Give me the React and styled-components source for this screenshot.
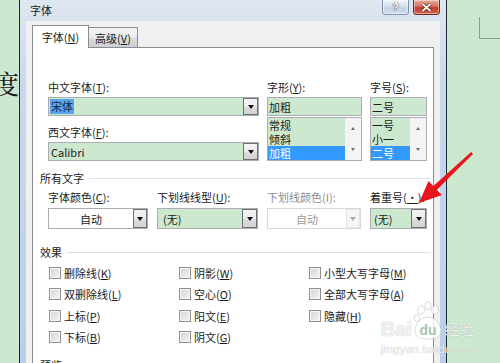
import React from "react";
import styled, { createGlobalStyle } from "styled-components";

const GlobalStyle = createGlobalStyle`
  html, body {
    margin: 0;
    padding: 0;
  }
  body {
    width: 500px;
    height: 363px;
    overflow: hidden;
    background: #cce8cf;
    font-family: "Noto Sans CJK SC", "Microsoft YaHei", sans-serif;
    font-size: 11px;
    color: #1b1b1b;
  }
`;

const Screen = styled.div`
  position: relative;
  display: flex;
  width: 500px;
  height: 363px;
  overflow: hidden;
  background: #cce8cf;
`;

const DocLeft = styled.div`
  width: 19px;
  flex-shrink: 0;
  display: flex;
  justify-content: flex-end;
  align-items: flex-start;
  overflow: hidden;
  padding-top: 68px;
  box-sizing: border-box;
  font-family: "Noto Serif CJK SC", "Noto Sans CJK SC", serif;
  font-size: 26px;
  line-height: 30px;
  color: #151515;
`;

const DocRight = styled.div`
  flex: 1;
`;

const CornerMark = styled.div`
  margin: 17px 0 0 32px;
  height: 21px;
  border-left: 1px solid #8c9c8e;
  border-bottom: 1px solid #8c9c8e;
`;

const Dialog = styled.div`
  width: 428px;
  flex-shrink: 0;
  box-sizing: border-box;
  display: flex;
  flex-direction: column;
  border-left: 1px solid #1e2833;
  border-right: 1px solid #1e2833;
  background: linear-gradient(#dfe7f1, #c9d9ed 80px, #b9cfe9);
`;

const TitleBar = styled.div`
  height: 21px;
  flex-shrink: 0;
  display: flex;
  align-items: flex-start;
  padding: 0 6px 0 10px;
`;

const Title = styled.div`
  margin-top: 3px;
  line-height: 14px;
  color: #1a1a1a;
`;

const Caption = styled.div`
  margin-left: auto;
  display: flex;
  gap: 4px;
  margin-top: -1px;
`;

const CaptionButton = styled.div`
  width: 27px;
  height: 16px;
  box-sizing: border-box;
  display: flex;
  align-items: center;
  justify-content: center;
  border: 1px solid ${(p) => (p.$close ? "#6b2a22" : "#7f93ad")};
  border-radius: 0 0 3px 3px;
  background: ${(p) =>
    p.$close
      ? "linear-gradient(#e9a99b, #d47565 45%, #c0392b 55%, #d6654f)"
      : "linear-gradient(#eef3f9, #d6e1ee 45%, #c2d2e6 55%, #d2deec)"};
  box-shadow: inset 0 0 0 1px rgba(255, 255, 255, 0.45);
  color: #fff;
  font-family: "Liberation Sans", sans-serif;
  font-weight: bold;
  font-size: 11px;
  text-shadow: 0 0 1px #333, 0 0 1px #333;
`;

const Body = styled.div`
  flex: 1;
  margin: 0 6px;
  padding: 4px 6px 0 6px;
  background: #f0f0f0;
  display: flex;
  flex-direction: column;
`;

const TabStrip = styled.div`
  height: 22px;
  display: flex;
  align-items: flex-end;
  position: relative;
  z-index: 1;
`;

const Tab = styled.div`
  box-sizing: border-box;
  width: ${(p) => (p.$active ? 57 : 49)}px;
  height: ${(p) => (p.$active ? 23 : 20)}px;
  margin-bottom: ${(p) => (p.$active ? -1 : 0)}px;
  display: flex;
  align-items: center;
  justify-content: center;
  border: 1px solid #898c95;
  border-bottom: none;
  border-left: ${(p) => (p.$active ? "1px solid #898c95" : "none")};
  background: ${(p) =>
    p.$active ? "#ffffff" : "linear-gradient(#f3f3f3, #ebebeb 50%, #dddddd 51%, #cfcfcf)"};
  padding-top: ${(p) => (p.$active ? 0 : 1)}px;
  white-space: nowrap;
`;

const Panel = styled.div`
  flex: 1;
  box-sizing: border-box;
  background: #ffffff;
  border: 1px solid #898c95;
  border-bottom: none;
  padding: 32px 2px 0 7px;
  display: flex;
  flex-direction: column;
`;

const Ac = styled.u`
  text-decoration: underline;
  text-underline-offset: 1px;
`;

const TopGrid = styled.div`
  margin-left: 8px;
  display: grid;
  grid-template-columns: 211px 95px 57px;
  column-gap: 8px;
`;

const FieldStack = styled.div`
  display: flex;
  flex-direction: column;
`;

const Label = styled.div`
  height: 14px;
  line-height: 14px;
  margin-top: ${(p) => p.$mt || 0}px;
  margin-bottom: ${(p) => (p.$mb === undefined ? 3 : p.$mb)}px;
  white-space: nowrap;
  color: ${(p) => (p.$disabled ? "#8e8e8e" : "#1b1b1b")};
`;

const ComboBox = styled.div`
  display: flex;
  height: ${(p) => p.$h}px;
  box-sizing: border-box;
  border: 1px solid ${(p) => (p.$disabled ? "#d9d9d9" : "#abadb3")};
  background: ${(p) => (p.$green ? "#cce8cf" : "#ffffff")};
`;

const ComboText = styled.div`
  flex: 1;
  display: flex;
  align-items: center;
  justify-content: ${(p) => (p.$center ? "center" : "flex-start")};
  padding-left: ${(p) => (p.$pad === undefined ? 1 : p.$pad)}px;
  color: ${(p) => (p.$disabled ? "#9b9b9b" : "#1b1b1b")};
  white-space: nowrap;
  overflow: hidden;
`;

const Highlight = styled.span`
  background: #5aa5ea;
  color: #0f2748;
  line-height: 15px;
  padding: 0 1px;
`;

const DropButton = styled.div`
  width: ${(p) => p.$w || 14}px;
  box-sizing: border-box;
  border: 1px solid ${(p) => (p.$disabled ? "#e4e4e4" : "#707070")};
  background: ${(p) =>
    p.$disabled ? "#f6f6f6" : "linear-gradient(#f4f4f4, #ececec 50%, #dedede 51%, #d2d2d2)"};
  display: flex;
  align-items: center;
  justify-content: center;

  &::after {
    content: "";
    border-left: 3px solid transparent;
    border-right: 3px solid transparent;
    border-top: 4px solid ${(p) => (p.$disabled ? "#ababab" : "#111111")};
  }
`;

const ListBox = styled.div`
  margin-top: 1px;
  height: 44px;
  box-sizing: border-box;
  border: 1px solid #abadb3;
  background: #cce8cf;
  display: flex;
`;

const ListItems = styled.div`
  flex: 1;
  display: flex;
  flex-direction: column;
`;

const ListItem = styled.div`
  height: 14px;
  line-height: 14px;
  overflow: hidden;
  padding-left: 1px;
  background: ${(p) => (p.$selected ? "#3399ff" : "transparent")};
  color: ${(p) => (p.$selected ? "#ffffff" : "#1b1b1b")};
`;

const ScrollTrack = styled.div`
  width: 16px;
  background: #f4f4f4;
  display: flex;
  flex-direction: column;
`;

const ScrollButton = styled.div`
  flex: 1;
  display: flex;
  align-items: center;
  justify-content: center;

  &::after {
    content: "";
    border-left: 2.5px solid transparent;
    border-right: 2.5px solid transparent;
    ${(p) => (p.$up ? "border-bottom: 3px solid #6f6f6f;" : "border-top: 3px solid #6f6f6f;")}
  }
`;

const SectionHeader = styled.div`
  display: flex;
  align-items: center;
  height: 14px;
  line-height: 14px;
  margin-top: ${(p) => p.$mt}px;
  white-space: nowrap;
`;

const SectionLine = styled.div`
  flex: 1;
  height: 1px;
  margin-left: 5px;
  background: #d9e1ea;
`;

const OptionRow = styled.div`
  margin: 5px 0 0 8px;
  display: grid;
  grid-template-columns: 100px 101px 94px 57px;
  column-gap: 9px;
`;

const CheckGrid = styled.div`
  margin: 3px 0 0 8px;
  display: grid;
  grid-template-columns: repeat(3, 130px);
  grid-auto-rows: 21.5px;
`;

const CheckItem = styled.div`
  display: flex;
  align-items: center;
  gap: 3px;
  padding-left: 1px;
  white-space: nowrap;
`;

const CheckBox = styled.span`
  width: 12px;
  height: 12px;
  flex-shrink: 0;
  box-sizing: border-box;
  border: 1px solid #8f8f8f;
  background: linear-gradient(135deg, #d3d5d8, #f3f3f3);
  box-shadow: inset 0 0 0 1px #f6f6f6;
`;

const ArrowLayer = styled.svg`
  position: absolute;
  left: 0;
  top: 0;
  pointer-events: none;
`;

const Watermark = styled.div`
  position: absolute;
  left: 381px;
  top: 300px;
  width: 96px;
  display: flex;
  flex-direction: column;
  align-items: flex-start;
  color: rgba(255, 255, 255, 0.82);
  text-shadow: 0 0 1px rgba(110, 110, 110, 0.55);
  pointer-events: none;
`;

const WmLogo = styled.div`
  position: relative;
  display: flex;
  align-items: flex-end;
  height: 40px;
  font-family: "Liberation Sans", Arial, sans-serif;
  font-weight: bold;
  font-size: 20px;
  line-height: 22px;
`;

const WmPaw = styled.div`
  position: relative;
  width: 30px;
  height: 40px;
  margin: 0 1px;
  display: flex;
  align-items: flex-end;
  justify-content: center;
`;

const WmDu = styled.span`
  position: relative;
  font-size: 14px;
  line-height: 20px;
  color: rgba(150, 190, 160, 0.9);
  text-shadow: none;
`;

const WmCn = styled.span`
  font-family: "Noto Sans CJK SC", sans-serif;
  font-weight: 400;
  font-size: 15px;
  line-height: 22px;
`;

const WmUrl = styled.div`
  margin-top: 3px;
  font-family: "Liberation Sans", Arial, sans-serif;
  font-size: 11.5px;
  line-height: 12px;
  letter-spacing: 0.2px;
`;

const Combo = ({ h, green, disabled, center, pad, btnW, children }) => (
  <ComboBox $h={h} $green={green} $disabled={disabled}>
    <ComboText $center={center} $pad={pad} $disabled={disabled}>
      {children}
    </ComboText>
    <DropButton $w={btnW} $disabled={disabled} />
  </ComboBox>
);

const List = ({ items, selected }) => (
  <ListBox>
    <ListItems>
      {items.map((it) => (
        <ListItem key={it} $selected={it === selected}>
          {it}
        </ListItem>
      ))}
    </ListItems>
    <ScrollTrack>
      <ScrollButton $up />
      <ScrollButton />
    </ScrollTrack>
  </ListBox>
);

const effects = [
  ["删除线", "K"],
  ["阴影", "W"],
  ["小型大写字母", "M"],
  ["双删除线", "L"],
  ["空心", "O"],
  ["全部大写字母", "A"],
  ["上标", "P"],
  ["阳文", "E"],
  ["隐藏", "H"],
  ["下标", "B"],
  ["阴文", "G"],
];

const RedArrow = () => (
  <ArrowLayer width="500" height="363" viewBox="0 0 500 363">
    <polygon
      points="419,203 428.5,181 433.4,186 471.2,151.9 473,154.1 436.8,190 442,195"
      fill="#e8151d"
    />
  </ArrowLayer>
);

const Paw = () => (
  <svg width="30" height="40" viewBox="0 0 30 40" style={{ position: "absolute", left: 0, top: 0 }}>
    <g fill="rgba(255,255,255,0.82)" stroke="rgba(120,120,120,0.45)" strokeWidth="0.6">
      <ellipse cx="8" cy="10" rx="3.3" ry="4.2" />
      <ellipse cx="15" cy="6" rx="3.2" ry="4" />
      <ellipse cx="22" cy="10" rx="3.3" ry="4.2" />
      <ellipse cx="4" cy="18" rx="2.8" ry="3.5" />
      <path d="M15 17 C 8 17, 2 24, 2 31 C 2 37, 7 39, 15 39 C 23 39, 28 37, 28 31 C 28 24, 22 17, 15 17 Z" />
    </g>
  </svg>
);

export default function App() {
  return (
    <>
      <GlobalStyle />
      <Screen>
        <DocLeft>
          <span>度</span>
        </DocLeft>

        <Dialog>
          <TitleBar>
            <Title>字体</Title>
            <Caption>
              <CaptionButton>?</CaptionButton>
              <CaptionButton $close>
                <svg width="11" height="9" viewBox="0 0 11 9">
                  <path d="M1.5 1 L9.5 8 M9.5 1 L1.5 8" stroke="#4a1a14" strokeWidth="3.2" />
                  <path d="M1.5 1 L9.5 8 M9.5 1 L1.5 8" stroke="#ffffff" strokeWidth="1.8" />
                </svg>
              </CaptionButton>
            </Caption>
          </TitleBar>

          <Body>
            <TabStrip>
              <Tab $active>
                字体(<Ac>N</Ac>)
              </Tab>
              <Tab>
                高级(<Ac>V</Ac>)
              </Tab>
            </TabStrip>

            <Panel>
              <TopGrid>
                <FieldStack>
                  <Label>
                    中文字体(<Ac>T</Ac>):
                  </Label>
                  <Combo h={19} green btnW={15}>
                    <Highlight>宋体</Highlight>
                  </Combo>
                  <Label $mt={9}>
                    西文字体(<Ac>F</Ac>):
                  </Label>
                  <Combo h={19} green btnW={15} pad={2}>
                    Calibri
                  </Combo>
                </FieldStack>

                <FieldStack>
                  <Label>
                    字形(<Ac>Y</Ac>):
                  </Label>
                  <ComboBox $h={19} $green>
                    <ComboText>加粗</ComboText>
                  </ComboBox>
                  <List items={["常规", "倾斜", "加粗"]} selected="加粗" />
                </FieldStack>

                <FieldStack>
                  <Label>
                    字号(<Ac>S</Ac>):
                  </Label>
                  <ComboBox $h={19} $green>
                    <ComboText>二号</ComboText>
                  </ComboBox>
                  <List items={["一号", "小一", "二号"]} selected="二号" />
                </FieldStack>
              </TopGrid>

              <SectionHeader $mt={10}>
                所有文字
                <SectionLine />
              </SectionHeader>

              <OptionRow>
                <FieldStack>
                  <Label $mb={4}>
                    字体颜色(<Ac>C</Ac>):
                  </Label>
                  <Combo h={21} center pad={0}>
                    自动
                  </Combo>
                </FieldStack>
                <FieldStack>
                  <Label $mb={4}>
                    下划线线型(<Ac>U</Ac>):
                  </Label>
                  <Combo h={21} green pad={5} btnW={15}>
                    (无)
                  </Combo>
                </FieldStack>
                <FieldStack>
                  <Label $mb={4} $disabled>
                    下划线颜色(I):
                  </Label>
                  <Combo h={21} center pad={0} disabled>
                    自动
                  </Combo>
                </FieldStack>
                <FieldStack>
                  <Label $mb={4}>
                    着重号(<Ac>·</Ac>):
                  </Label>
                  <Combo h={21} green pad={3} btnW={15}>
                    (无)
                  </Combo>
                </FieldStack>
              </OptionRow>

              <SectionHeader $mt={16}>
                效果
                <SectionLine />
              </SectionHeader>

              <CheckGrid>
                {effects.map(([name, key]) => (
                  <CheckItem key={name}>
                    <CheckBox />
                    <span>
                      {name}(<Ac>{key}</Ac>)
                    </span>
                  </CheckItem>
                ))}
              </CheckGrid>

              <SectionHeader $mt={10}>
                预览
                <SectionLine />
              </SectionHeader>
            </Panel>
          </Body>
        </Dialog>

        <DocRight>
          <CornerMark />
        </DocRight>

        <RedArrow />

        <Watermark>
          <WmLogo>
            <span>Bai</span>
            <WmPaw>
              <Paw />
              <WmDu>du</WmDu>
            </WmPaw>
            <WmCn>经验</WmCn>
          </WmLogo>
          <WmUrl>jingyan.baidu.com</WmUrl>
        </Watermark>
      </Screen>
    </>
  );
}
